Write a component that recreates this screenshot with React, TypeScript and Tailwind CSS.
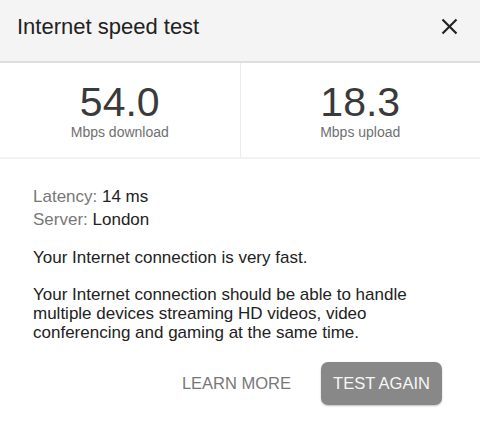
import React from 'react';

const Stat = ({ value, label }: { value: string; label: string }) => (
  <div className="flex flex-1 flex-col items-center pt-[19px] pb-[18px]">
    <div className="text-[41px] leading-[41px] text-[#3a3a3a]">{value}</div>
    <div className="mt-[2px] text-[14px] leading-[14px] text-[#707070]">{label}</div>
  </div>
);

const App: React.FC = () => {
  return (
    <div className="min-h-screen bg-white font-['Liberation_Sans',Arial,sans-serif] text-[#222]">
      {/* header */}
      <div className="flex h-[63px] items-start justify-between border-b-2 border-[#dedede] bg-[#f4f4f4] pl-[17px] pr-[22px] pt-[16px]">
        <h1 className="text-[22px] leading-[22px] text-[#222]">Internet speed test</h1>
        <button className="mt-[2px] text-[#222]" aria-label="Close">
          <svg width="17" height="17" viewBox="0 0 17 17" fill="none" stroke="currentColor" strokeWidth="2.2">
            <path d="M1.5 1.5 15.5 15.5" />
            <path d="M15.5 1.5 1.5 15.5" />
          </svg>
        </button>
      </div>

      {/* results */}
      <div className="flex border-b-2 border-[#f2f2f2]">
        <Stat value="54.0" label="Mbps download" />
        <div className="w-px bg-[#ececec]" />
        <Stat value="18.3" label="Mbps upload" />
      </div>

      {/* details */}
      <div className="px-[33px] pt-[26px]">
        <div className="text-[17px] leading-[23px]">
          <p>
            <span className="text-[#777]">Latency:</span> 14 ms
          </p>
          <p>
            <span className="text-[#777]">Server:</span> London
          </p>
        </div>
        <p className="mt-[17px] text-[17px] leading-[19px]">Your Internet connection is very fast.</p>
        <p className="mt-[18px] text-[17px] leading-[19px]">
          Your Internet connection should be able to handle multiple devices streaming HD videos, video
          conferencing and gaming at the same time.
        </p>
      </div>

      <div className="mt-[20px] flex items-center justify-end gap-[30px] pr-[38px]">
        <button className="text-[16.5px] leading-[43px] text-[#777]">LEARN MORE</button>
        <button className="flex h-[43px] w-[121px] items-center justify-center rounded-[7px] bg-[#888] text-[16.5px] text-[#f7f7f7] shadow-[0_1px_2px_rgba(0,0,0,0.25)]">
          TEST AGAIN
        </button>
      </div>
    </div>
  );
};

export default App;
